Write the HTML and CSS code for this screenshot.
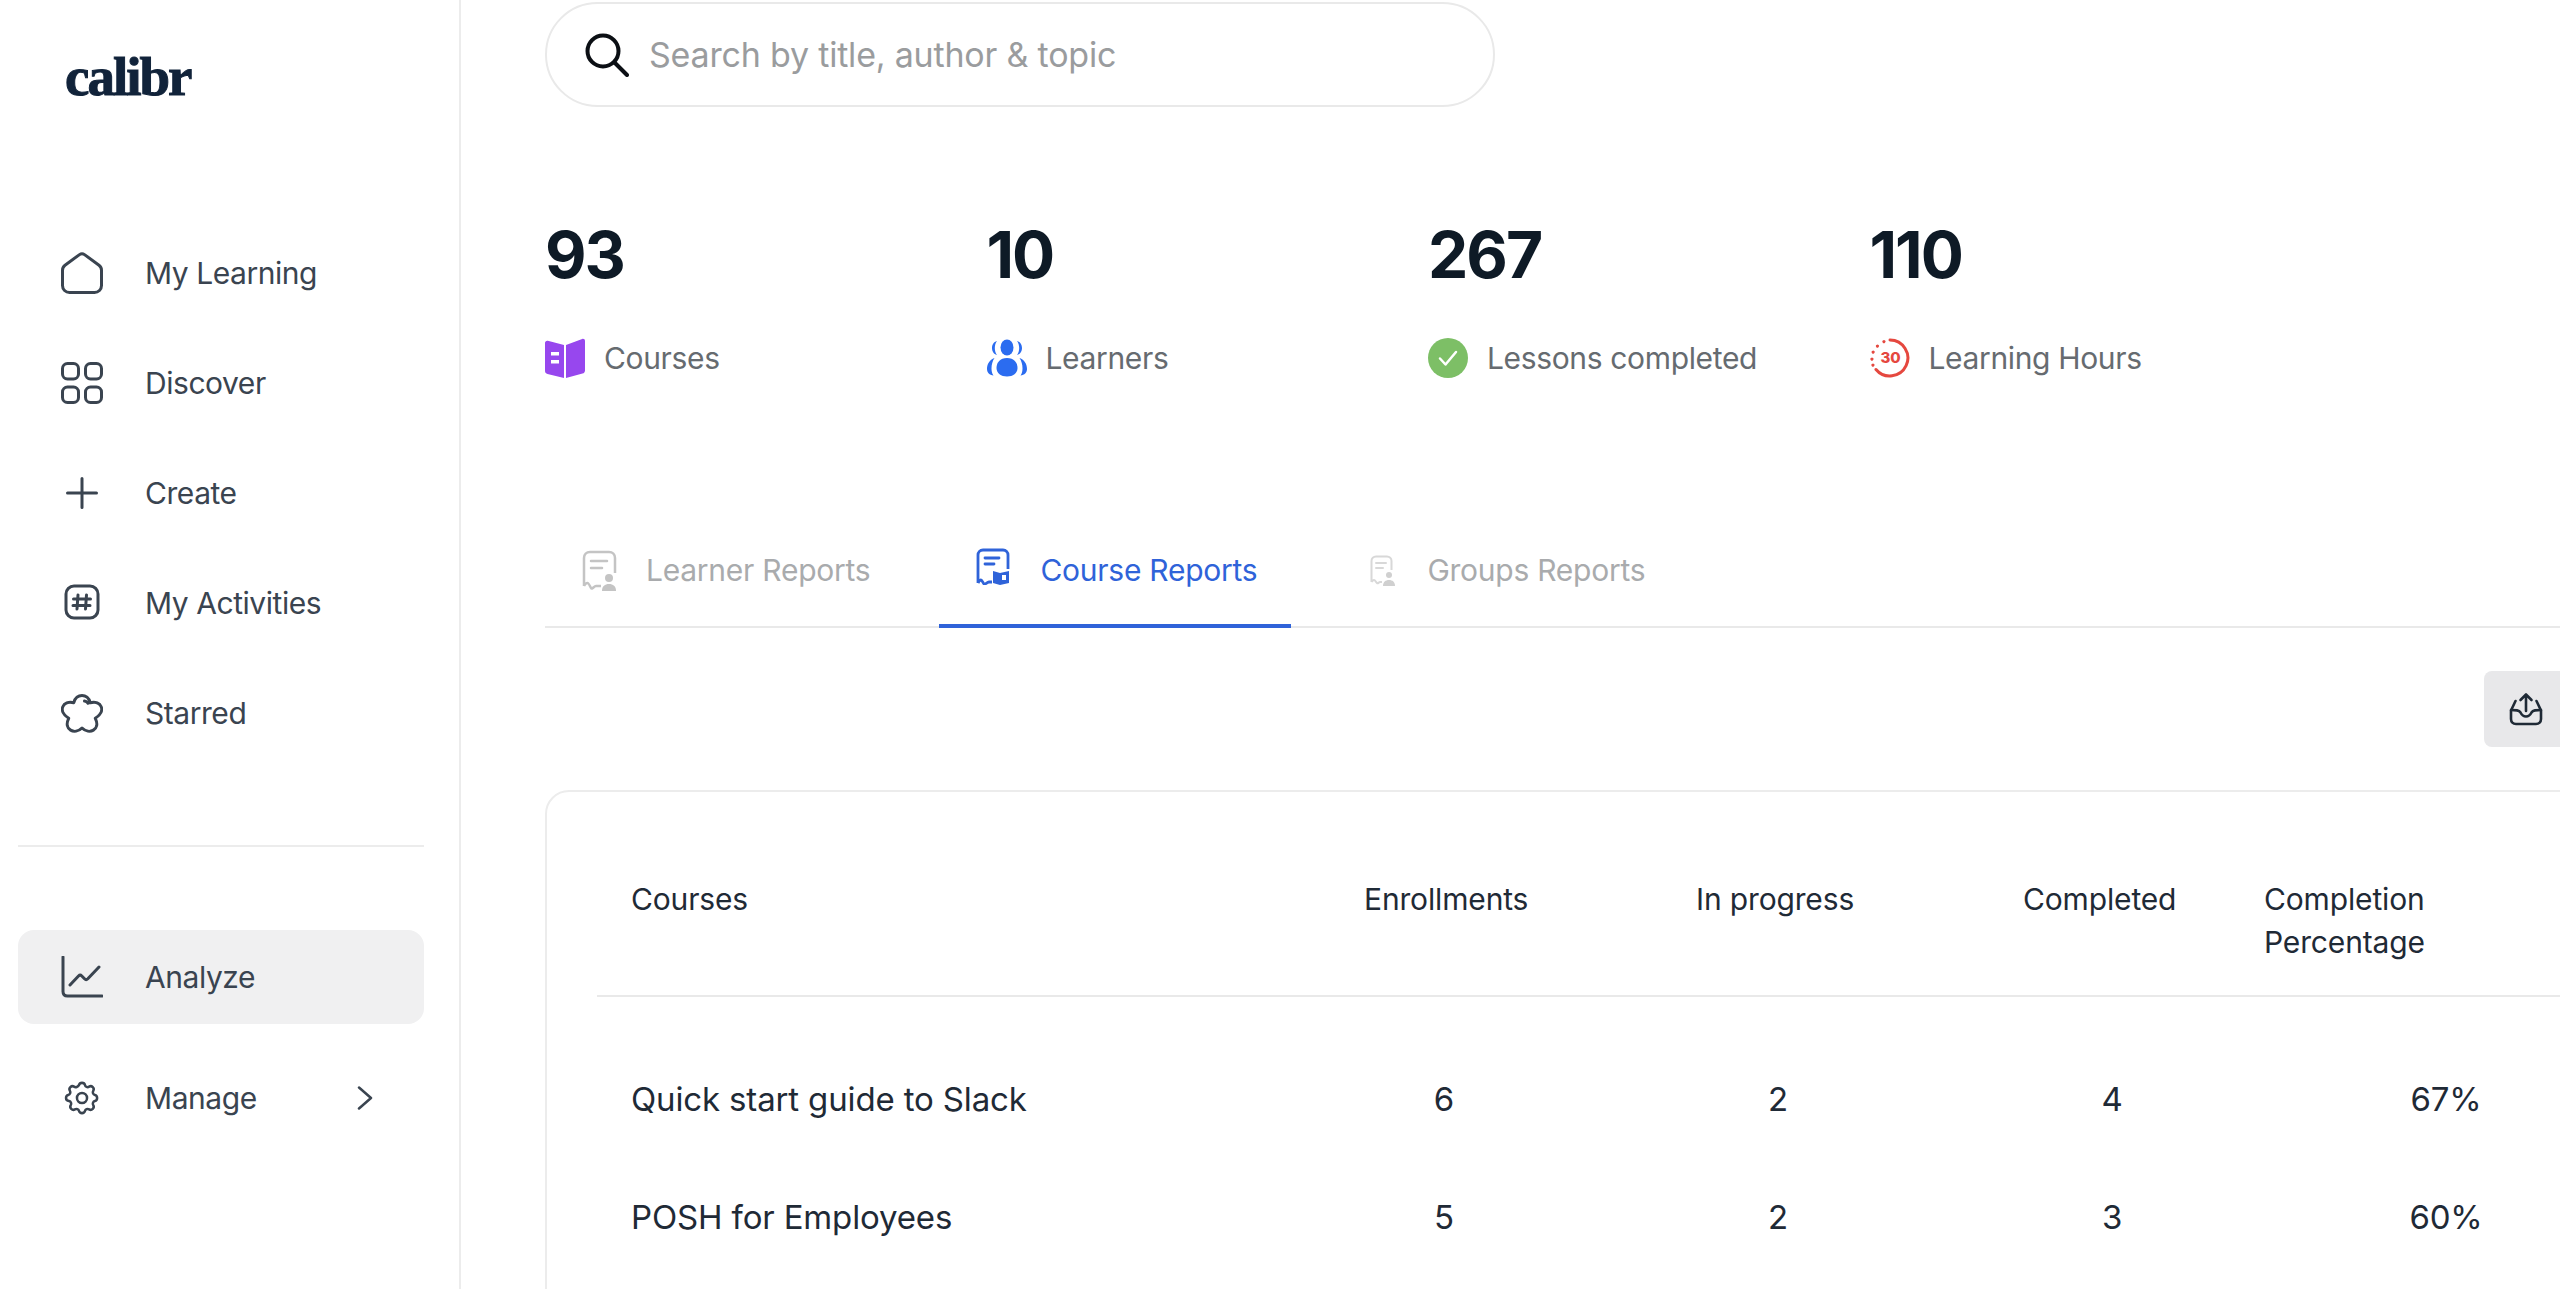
FILE: index.html
```html
<!DOCTYPE html>
<html lang="en">
<head>
    <meta charset="UTF-8">
    <title>Calibr - Analyze</title>
    <link rel="stylesheet" href="styles.css">
</head>
<body>
    <aside class="sidebar">
        <div class="logo">calibr</div>

        <nav class="nav">
            <a class="nav-item">
                <svg class="nav-icon" viewBox="0 0 42 42"><path d="M18.500 2.600 4 13.200C2.400 14.400 1.500 16.200 1.500 18.200V33.500c0 3.900 3.100 7 7 7h25c3.900 0 7-3.100 7-7V18.200c0-2-.9-3.800-2.500-5L23.500 2.600c-1.500-1.100-3.500-1.100-5 0Z"/></svg>
                <span>My Learning</span>
            </a>
            <a class="nav-item">
                <svg class="nav-icon" viewBox="0 0 42 42"><rect x="1.500" y="1.500" width="16" height="15.500" rx="5"/><rect x="24.500" y="1.500" width="16" height="15.500" rx="5"/><rect x="1.500" y="25" width="16" height="15.500" rx="5"/><rect x="24.500" y="25" width="16" height="15.500" rx="5"/></svg>
                <span>Discover</span>
            </a>
            <a class="nav-item">
                <svg class="nav-icon" viewBox="0 0 42 42"><path d="M6.500 21h29M21 6.500v29"/></svg>
                <span>Create</span>
            </a>
            <a class="nav-item">
                <svg class="nav-icon" viewBox="0 0 42 42"><rect x="5" y="4" width="32" height="32" rx="8"/><path d="M17 13l-1 14M25.500 13l-1 14M12.500 17h17M12 23.500h17"/></svg>
                <span>My Activities</span>
            </a>
            <a class="nav-item">
                <svg class="nav-icon" viewBox="0 0 42 42"><path d="M12.800 10.700C15 1 27 1 29.200 10.700 40 8 46 19 34.300 26.300 40 38 28 43 21 36 14 43 2 38 7.700 26.300-4 19 2 8 12.800 10.700ZM23.500 9c1.500.2 2.800 1 3.500 2.300"/></svg>
                <span>Starred</span>
            </a>
        </nav>

        <div class="divider"></div>

        <a class="nav-item active">
            <svg class="nav-icon" viewBox="0 0 42 42"><path d="M2 1v34.500c0 3 1.500 4.500 4.500 4.500h34.500M9 29l8.500-9c1-1 2.300-1 3.300 0l2.700 2.800c1 1 2.300 1 3.300 0L38 11"/></svg>
            <span>Analyze</span>
        </a>
        <a class="nav-item">
            <svg class="nav-icon" viewBox="-4 -4 50 50"><circle cx="21" cy="21" r="6"/><path d="M17.500 5.500c.4-1.700 1.500-2.500 3.500-2.500s3.100.8 3.500 2.500c.5 2.300 3 3.300 5 2 1.500-1 2.900-.8 4.300.6s1.600 2.800.6 4.300c-1.200 2-.2 4.500 2 5 1.700.4 2.600 1.600 2.600 3.600s-.9 3.200-2.600 3.600c-2.200.5-3.200 3-2 5 1 1.500.8 2.900-.6 4.300s-2.800 1.600-4.300.6c-2-1.200-4.500-.2-5 2-.4 1.700-1.500 2.500-3.500 2.500s-3.100-.8-3.500-2.500c-.5-2.200-3-3.200-5-2-1.500 1-2.900.8-4.300-.6s-1.600-2.800-.6-4.300c1.200-2 .2-4.500-2-5C2.900 24.200 2 23 2 21s.9-3.200 2.600-3.600c2.200-.5 3.200-3 2-5-1-1.500-.8-2.900.6-4.300s2.800-1.600 4.300-.6c2 1.300 4.500.3 6-2Z"/></svg>
            <span>Manage</span>
            <svg class="chevron" viewBox="0 0 16 24"><path d="M2 1.500 14 12 2 22.500"/></svg>
        </a>
    </aside>

    <main class="main">
        <div class="search">
            <svg class="search-icon" viewBox="0 0 44 44"><circle cx="18" cy="18" r="15.500"/><path d="M29.500 29.500 42 42"/></svg>
            <span>Search by title, author &amp; topic</span>
        </div>

        <section class="stats">
            <div class="stat">
                <div class="stat-num">93</div>
                <div class="stat-label">
                    <svg class="stat-icon" viewBox="0 0 40 40"><path fill="#9747ee" d="M0 5c0-1.500 1.300-2.500 2.800-2.200L19 7v33L2.500 36C1 35.600 0 34.500 0 33ZM21 7 37.200 1c1.500-.5 2.800.5 2.800 2v29.500c0 1.500-1 2.700-2.500 3.100L21 40Z"/><path fill="#fff" d="M6 14h8v3.500H6zM6 22h8v3.500H6z"/></svg>
                    <span>Courses</span>
                </div>
            </div>
            <div class="stat">
                <div class="stat-num">10</div>
                <div class="stat-label">
                    <svg class="stat-icon" viewBox="0 0 40 40"><g fill="#2b6cf0"><ellipse cx="20" cy="9.500" rx="6.500" ry="8"/><path d="M20 20c7 0 10.500 4.500 10.500 10 0 5-4.500 8.500-10.500 8.500S9.500 35 9.500 30c0-5.500 3.500-10 10.500-10Z"/><path d="M10 3C6.500 4 5 7 5 10s1.500 6 5 7c-1.500-2-2.200-4.500-2.200-7S8.500 5 10 3ZM30 3c3.500 1 5 4 5 7s-1.500 6-5 7c1.500-2 2.200-4.500 2.200-7S31.500 5 30 3ZM7.500 20C2.500 22 0 26 0 31c0 3.500 2.500 6 6.500 6.500C5 35.500 4.500 33 4.500 30.500 4.500 26.500 5.500 23 7.500 20ZM32.500 20c5 2 7.500 6 7.500 11 0 3.500-2.500 6-6.500 6.500 1.500-2 2-4.500 2-7 0-4-1-7.500-3-10.500Z"/></g></svg>
                    <span>Learners</span>
                </div>
            </div>
            <div class="stat">
                <div class="stat-num">267</div>
                <div class="stat-label">
                    <svg class="stat-icon" viewBox="0 0 40 40"><circle cx="20" cy="20" r="20" fill="#7dbf66"/><path d="M12 20.500l5.500 6L28 14" fill="none" stroke="#fff" stroke-width="2.500" stroke-linecap="round" stroke-linejoin="round"/></svg>
                    <span>Lessons completed</span>
                </div>
            </div>
            <div class="stat">
                <div class="stat-num">110</div>
                <div class="stat-label">
                    <svg class="stat-icon" viewBox="0 0 40 40"><path d="M20 2a18 18 0 1 1-14 29.500" fill="none" stroke="#e5483f" stroke-width="3" stroke-linecap="round"/><path d="M14 3.500 13.900 3.600M7.500 8 7.400 8.100M3.200 14 3.100 14.100M2 21 1.900 21.100M3 27 2.900 27.100" fill="none" stroke="#e5483f" stroke-width="3" stroke-linecap="round"/><text x="20.500" y="25" class="timer-text">30</text></svg>
                    <span>Learning Hours</span>
                </div>
            </div>
        </section>

        <div class="content">
            <div class="tabs">
                <a class="tab">
                    <span class="tab-icon">
                        <svg width="35" height="41" viewBox="0 0 35 41" fill="none" stroke="#c4c4c4" stroke-width="2.500"><path d="M2 36V8c0-3.500 2.500-6 6-6h19c3.500 0 6 2.500 6 6v15M2 36c1-2 2.500-3 3.500-3s2.500 3 3.500 5 3-2 5-2h5"/><path d="M9 11h16M9 18h11" stroke-linecap="round"/><circle cx="27" cy="28" r="4" fill="#c4c4c4" stroke="none"/><path d="M20 41c0-5 3-7 7-7s7 2 7 7Z" fill="#c4c4c4" stroke="none"/></svg>
                    </span>
                    <span>Learner Reports</span>
                </a>
                <a class="tab active">
                    <span class="tab-icon tab-icon-raised">
                        <svg width="34" height="37" viewBox="0 0 34 37" fill="none" stroke="#2f63d9" stroke-width="2.800"><path d="M2 35V7c0-3 2-5 5-5h20c3 0 5 2 5 5v14M2 35c1-2 2-3 3-3s2 3 3 4 3-2 5-2h3"/><path d="M9 10h14M9 16h9" stroke-linecap="round"/><path d="M17 23l7 2 9-2v12l-9 2-7-2Z" fill="#2f63d9" stroke="none"/><path d="M26 27h4v5h-4z" fill="#fff" stroke="none"/></svg>
                    </span>
                    <span>Course Reports</span>
                </a>
                <a class="tab">
                    <span class="tab-icon tab-icon-small">
                        <svg width="26" height="31" viewBox="0 0 26 31" fill="none" stroke="#d8d8d8" stroke-width="2"><path d="M1.500 27V6c0-2.500 2-4.500 4.500-4.500h11c2.500 0 4.500 2 4.500 4.500v9M1.500 27c1-1.500 1.500-2 2.500-2s2 2 3 3 2-1 3-1h2"/><path d="M6 8h10M6 13h7" stroke-linecap="round"/><circle cx="19" cy="20" r="3" fill="#d0d0d0" stroke="none"/><path d="M13 31c0-4 2.500-6 6-6s6 2 6 6Z" fill="#d0d0d0" stroke="none"/></svg>
                    </span>
                    <span>Groups Reports</span>
                </a>
            </div>

            <div class="toolbar">
                <button class="export-btn">
                    <svg viewBox="0 0 34 34" width="34" height="34" fill="none" stroke="#1f2a36" stroke-width="2.600" stroke-linecap="round" stroke-linejoin="round"><path d="M17 19V3M11.500 8 17 2.500 22.500 8"/><path d="M6.500 9 2 18.500V27c0 3 2 5 5 5h20c3 0 5-2 5-5v-8.500L27.500 9"/><path d="M2 18c5 0 8 0 9.500 2.500 1.500 3 3 4 5.500 4s4-1 5.500-4C24 18 27 18 32 18"/></svg>
                </button>
            </div>

            <section class="card">
                <div class="table-head">
                    <div>Courses</div>
                    <div>Enrollments</div>
                    <div>In progress</div>
                    <div>Completed</div>
                    <div>Completion<br>Percentage</div>
                </div>
                <div class="table-body">
                    <div class="table-row">
                        <div class="course-name">Quick start guide to Slack</div>
                        <div>6</div>
                        <div>2</div>
                        <div>4</div>
                        <div>67%</div>
                    </div>
                    <div class="table-row">
                        <div class="course-name">POSH for Employees</div>
                        <div>5</div>
                        <div>2</div>
                        <div>3</div>
                        <div>60%</div>
                    </div>
                </div>
            </section>
        </div>
    </main>
</body>
</html>
```

FILE: styles.css
```css
* {
    box-sizing: border-box;
}
html, body {
    height: 100%;
    margin: 0;
    overflow: hidden;
}
body {
    display: flex;
    font-family: Inter, "Noto Sans", sans-serif;
    color: #1f2a36;
    background-color: #fff;
}
.sidebar {
    flex: 0 0 461px;
    height: 100%;
    padding: 0 35px 0 18px;
    border-right: 2px solid #ececec;
}
.logo {
    height: 218px;
    padding: 42px 0 0 47px;
    font-family: "Liberation Serif", serif;
    font-size: 55px;
    font-weight: bold;
    line-height: 70px;
    letter-spacing: -2px;
    color: #11233a;
    -webkit-text-stroke: 1px #11233a;
}
.nav-item {
    display: flex;
    align-items: center;
    height: 110px;
    padding-left: 43px;
    font-size: 30px;
    letter-spacing: -0.45px;
    color: #3a4450;
}
.nav-item.active {
    height: 94px;
    margin: 83px 0 19px;
    background-color: #f0f0f1;
    border-radius: 16px;
}
.nav-icon {
    flex: 0 0 42px;
    width: 42px;
    height: 42px;
    margin-right: 42px;
    fill: none;
    stroke: #3a4450;
    stroke-width: 3;
    stroke-linecap: round;
    stroke-linejoin: round;
}
.chevron {
    width: 16px;
    height: 24px;
    margin-left: auto;
    margin-right: 51px;
    fill: none;
    stroke: #3a4450;
    stroke-width: 2.500;
    stroke-linecap: round;
    stroke-linejoin: round;
}
.divider {
    height: 2px;
    margin-top: 77px;
    background-color: #ececec;
}
.main {
    flex: 1;
    min-width: 0;
    padding: 2px 0 0 84px;
    overflow: hidden;
}
.search {
    display: flex;
    align-items: center;
    width: 950px;
    height: 105px;
    padding-left: 38px;
    border: 2px solid #e9e9e9;
    border-radius: 53px;
    font-size: 34px;
    letter-spacing: -0.2px;
    color: #9a9c9e;
}
.search-icon {
    width: 44px;
    height: 44px;
    margin-right: 20px;
    fill: none;
    stroke: #0b0f14;
    stroke-width: 4;
    stroke-linecap: round;
}
.stats {
    display: grid;
    grid-template-columns: repeat(4, 441.500px);
    margin-top: 108px;
}
.stat-num {
    height: 80px;
    font-size: 64px;
    font-weight: 700;
    line-height: 80px;
    letter-spacing: -2px;
    color: #0e1a26;
}
.stat-label {
    display: flex;
    align-items: center;
    height: 40px;
    margin-top: 43px;
    font-size: 30px;
    letter-spacing: -0.35px;
    color: #666b70;
}
.stat-icon {
    width: 40px;
    height: 40px;
    margin-right: 19px;
}
.timer-text {
    font-family: Inter, sans-serif;
    font-size: 15px;
    font-weight: 800;
    letter-spacing: 0;
    text-anchor: middle;
    fill: #e5483f;
}
.content {
    width: 2100px;
}
.tabs {
    display: flex;
    gap: 35px;
    height: 116px;
    margin-top: 134px;
    border-bottom: 2px solid #e9e9e9;
}
.tab {
    display: flex;
    align-items: center;
    height: 116px;
    padding: 4px 34px 0 37px;
    border-bottom: 4px solid transparent;
    font-size: 30px;
    letter-spacing: -0.25px;
    color: #a9abad;
}
.tab.active {
    border-bottom-color: #2f63d9;
    color: #2f63d9;
}
.tab-icon {
    display: flex;
    flex: 0 0 64px;
}
.tab-icon-raised {
    margin-top: -8px;
}
.tab-icon-small {
    padding-left: 7px;
}
.toolbar {
    display: flex;
    justify-content: flex-end;
    margin-top: 43px;
}
.export-btn {
    width: 161px;
    height: 76px;
    padding: 3px 0 0 25px;
    text-align: left;
    background-color: #e8e8ea;
    border: none;
    border-radius: 8px;
}
.card {
    height: 900px;
    margin-top: 43px;
    padding-top: 86px;
    border: 2px solid #ececec;
    border-radius: 24px;
    font-size: 30px;
    letter-spacing: -0.15px;
}
.table-head {
    display: grid;
    grid-template-columns: 733px 332px 327px 241px auto;
    margin-left: 50px;
    padding: 0 0 31px 34px;
    border-bottom: 2px solid #e9e9e9;
    line-height: 43px;
}
.table-body {
    margin-top: 43px;
    margin-left: 84px;
}
.table-row {
    display: grid;
    grid-template-columns: 646px repeat(4, 334px);
    align-items: center;
    height: 118px;
    font-size: 33px;
    text-align: center;
}
.course-name {
    text-align: left;
}
```
